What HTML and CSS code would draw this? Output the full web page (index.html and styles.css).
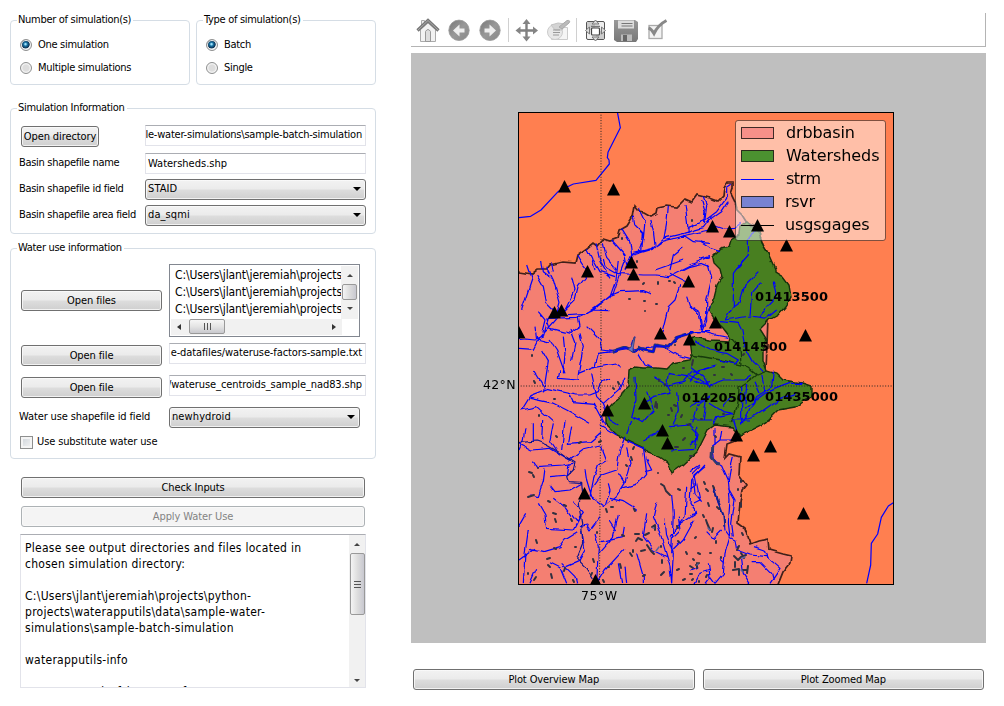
FILE: index.html
```html
<!DOCTYPE html>
<html lang="en">
<head>
<meta charset="utf-8">
<title>Water use simulation</title>
<link rel="stylesheet" href="styles.css">
</head>
<body>
<main class="window">
<section class="controls">
  <div class="top-groups">
    <fieldset class="group">
      <legend>Number of simulation(s)</legend>
      <label class="radio-row"><span class="radio on"></span><span>One simulation</span></label>
      <label class="radio-row"><span class="radio"></span><span>Multiple simulations</span></label>
    </fieldset>
    <fieldset class="group">
      <legend>Type of simulation(s)</legend>
      <label class="radio-row"><span class="radio on"></span><span>Batch</span></label>
      <label class="radio-row"><span class="radio"></span><span>Single</span></label>
    </fieldset>
  </div>
  <fieldset class="group sim-info">
    <legend>Simulation Information</legend>
    <div class="form-row first"><div class="lab"><span class="btn small">Open directory</span></div><div class="field tail"><span>le-water-simulations\sample-batch-simulation</span></div></div>
    <div class="form-row"><div class="lab">Basin shapefile name</div><div class="field">Watersheds.shp</div></div>
    <div class="form-row"><div class="lab">Basin shapefile id field</div><div class="combo">STAID<i class="caret"></i></div></div>
    <div class="form-row"><div class="lab">Basin shapefile area field</div><div class="combo">da_sqmi<i class="caret"></i></div></div>
  </fieldset>
  <fieldset class="group water">
    <legend>Water use information</legend>
    <div class="form-row r-list"><div class="lab"><span class="btn">Open files</span></div>
      <div class="listbox">
        <div class="list-main">
          <div class="list-items"><div>C:\Users\jlant\jeremiah\projects</div><div>C:\Users\jlant\jeremiah\projects</div><div>C:\Users\jlant\jeremiah\projects</div></div>
          <div class="vbar"><i class="up"></i><i class="thumb"></i><i class="down"></i></div>
        </div>
        <div class="hbar"><i class="left"></i><i class="thumb"><b></b><b></b><b></b></i><i class="right"></i></div>
      </div></div>
    <div class="form-row r-b"><div class="lab"><span class="btn">Open file</span></div><div class="field tail factors"><span>e-datafiles/wateruse-factors-sample.txt</span></div></div>
    <div class="form-row r-c"><div class="lab"><span class="btn">Open file</span></div><div class="field tail centroids"><span>/wateruse_centroids_sample_nad83.shp</span></div></div>
    <div class="form-row id-row"><div class="lab">Water use shapefile id field</div><div class="combo">newhydroid<i class="caret"></i></div></div>
    <label class="check-row"><span class="check"></span>Use substitute water use</label>
  </fieldset>
  <div class="btn wide">Check Inputs</div>
  <div class="btn wide disabled">Apply Water Use</div>
  <div class="log">
    <div class="log-text">Please see output directories and files located in<br>chosen simulation directory:<br><br>C:\Users\jlant\jeremiah\projects\python-<br>projects\waterapputils\data\sample-water-<br>simulations\sample-batch-simulation<br><br>waterapputils-info<br><br>area_summed_of_huc_sum_from</div>
    <div class="vbar tall"><i class="up"></i><i class="thumb"><b></b><b></b><b></b></i><i class="down"></i></div>
  </div>
</section>
<section class="plot">
  <div class="toolbar">
    <svg width="270" height="34" viewBox="411 13 270 34">
      <defs><linearGradient id="ball" x1="0" y1="0" x2="1" y2="1"><stop offset="0" stop-color="#777"/><stop offset=".5" stop-color="#999"/><stop offset="1" stop-color="#888"/></linearGradient>
      <linearGradient id="disk" x1="0" y1="0" x2="0" y2="1"><stop offset="0" stop-color="#999"/><stop offset="1" stop-color="#777"/></linearGradient></defs>
      <g stroke="#aaa" fill="#eee"><path d="M421.500 20.500h3v6h-3z"/><path d="M420.500 29.500L428 23l7.500 6.500v12h-15z" fill="#f2f2f2"/><path d="M425.500 41.500v-10q2.500-4 5 0v10z" fill="#ddd" stroke="#999"/></g>
      <path d="M417.500 30.500L428 20.500L438.500 30.500" fill="none" stroke="#777" stroke-width="3.200"/><path d="M418 30L428 20.500L438 30" fill="none" stroke="#aaa" stroke-width="1"/>
      <circle cx="459" cy="30.300" r="10.200" fill="url(#ball)" stroke="#999" stroke-width=".8"/><path d="M453 30.500l6.500-6v4h5v4h-5v4z" fill="#eee"/>
      <circle cx="490" cy="30.300" r="10.200" fill="url(#ball)" stroke="#999" stroke-width=".8"/><path d="M496 30.500l-6.500-6v4h-5v4h5v4z" fill="#eee"/>
      <path d="M508.500 18v24M576.500 18v24" stroke="#d0d0d0"/>
      <path d="M526.500 22v17M518 30.500h17" stroke="#808080" stroke-width="2.400"/><path d="M526.500 19l4 5h-8zM526.500 41.500l4-5h-8zM515.500 30.500l5-4v8zM538 30.500l-5-4v8z" fill="#858585"/>
      <g fill="#f5f5f5" stroke="#ccc"><path d="M551.500 27.500h16v12h-16z"/><circle cx="555" cy="32" r="7.500" fill="#e8e8e8"/><path d="M551 25l7-2l7 1l-3 6h-7z" fill="#d4d4d4" stroke="#c4c4c4"/><path d="M559 27l8-6.500q4-.5 2 2.500l-7 6z" fill="#bbb" stroke="#aaa"/></g><path d="M553 30h7M553 32.500h7M553 35h6" stroke="#999" stroke-width="1.200"/>
      <rect x="586.500" y="21.500" width="18" height="18" rx="1.500" fill="#eee" stroke="#555"/><path d="M587 22h8v8h-8zM596 31h8v8h-8z" fill="#ccc"/><path d="M595.500 20l3.500 4h-7zM595.500 41l3.500-4h-7zM585.500 30.500l4-3.500v7zM605.500 30.500l-4-3.500v7z" fill="#ddd" stroke="#777"/><rect x="591.500" y="28" width="8" height="7" rx="1" fill="#fff" stroke="#444" stroke-width="1.200"/><path d="M591 26.500h9" stroke="#777" stroke-width="1.500"/>
      <path d="M614 20h21l3 2v17l-2 3h-19l-3-2z" fill="url(#disk)"/><rect x="618" y="20.500" width="16" height="8" fill="#ddd"/><path d="M621.500 23.500h11M621.500 26h11" stroke="#777"/><rect x="621" y="34.500" width="11" height="6.500" fill="#bbb"/><rect x="623" y="35" width="4" height="6" fill="#666"/>
      <rect x="649" y="25.500" width="13" height="13" fill="#f3f3f3" stroke="#aaa" stroke-width="1.300"/><path d="M648.500 28q3 1 5.500 5.500q4-8.500 12.500-13" fill="none" stroke="#888" stroke-width="3"/>
    </svg>
  </div>
  <div class="canvas">
  <svg width="575" height="590" viewBox="411 53 575 590">
    <defs>
      <clipPath id="frame"><rect x="518" y="112" width="376" height="472"/></clipPath>
      <filter id="rough" filterUnits="userSpaceOnUse" x="500" y="100" width="410" height="500" color-interpolation-filters="sRGB"><feTurbulence type="fractalNoise" baseFrequency=".11" numOctaves="1" seed="4"/><feDisplacementMap in="SourceGraphic" scale="5" xChannelSelector="R" yChannelSelector="G"/></filter>
      <path id="tri" d="M0-6.500L6.500 6H-6.500Z"/>
    </defs>
    <rect x="518" y="112" width="376" height="472" fill="#ff7f50"/>
    <g clip-path="url(#frame)">
    <g filter="url(#rough)">
      <path class="basin" d="M510 270L519 272L532 274L538 269L547 269L550 265L562 262L575 263L577 255L587 248L593 243L597 246L603 239L610 241L618 238L620 230L627 226L632 218L634 206L638 211L645 212L652 216L657 213L658 208L667 206L677 207L685 199L692 202L697 195L710 198L718 201L723 196L724 187L727 182L733 182L733 188L731 194L735 202L737 210L742 215L747 223L756 227L759 233L763 245L768 253L770 263L766 371L770 420L745 430L735 441L727 444L725 458L729 454L740 457L739 475L746 485L742 490L740 503L738 523L745 528L750 544L758 541L768 539L769 550L783 554L791 556L790 563L783 572L775 592L505 592Z"/>
      <path class="shed" d="M747 222L741 226L740 234L731 240L729 247L721 249L713 257L714 263L720 269L722 277L717 285L714 297L709 310L715 320L723 328L730 337L729 341L710 340L693 337L690 340L692 355L690 360L673 363L667 369L657 368L643 368L635 367L629 370L628 386L623 391L620 398L612 404L605 412L605 423L617 435L627 440L642 447L647 453L660 458L667 463L672 473L683 465L697 452L708 430L715 425L732 427L740 436L760 426L768 420L778 410L795 407L802 402L811 397L811 386L802 383L783 380L777 374L767 371L763 360L763 348L767 340L760 329L769 320L778 315L785 307L791 297L789 285L783 277L775 272L775 269L768 253L763 245L759 233Z"/>
      <path d="M690 355L703 357L720 360L741 365L748 368L757 375L767 371M741 365L740 348L731 338M757 375L747 383L739 388L738 403L735 413L730 423" fill="none" stroke="#163b0c" stroke-width="1.300"/>
    </g>
    <g filter="url(#rough)">
    <g class="stream" transform="translate(510 105) scale(.33333)">
      <path d="M350 480L370 445L430 430L460 400L520 385L580 368L610 330M370 450L420 435L455 410L530 390L600 375M370 335L375 360L400 385L395 440M385 310L405 350L400 400L385 445M422 345L430 380L435 420M475 305L472 340L462 400M525 300L532 350L535 385M575 285L585 320L580 360M335 370L360 410L365 450L345 495M305 405L345 450L350 480M280 415L290 460L320 495M258 415L270 470L300 520M230 430L245 460L255 495M200 450L215 475L235 500M125 475L130 500M520 390L550 410L600 415M520 425L490 450L480 495M600 455L540 480L510 495"/>
    </g>
    <g class="stream" transform="translate(700 105) scale(.33333)">
      <path d="M10 350L50 320L80 280L80 245L95 235M15 355L65 320L85 290M10 275L20 300L15 345L-40 370M35 360L70 372L105 370L125 355M165 375L145 405L145 450L105 495M0 410L30 430L60 440M0 460L30 452"/>
    </g>
    <g class="stream" transform="translate(510 260) scale(.33333)">
      <path d="M27 265L70 268L85 238L120 200L150 165L230 160L300 110L318 60L325 0M27 235L75 240L100 230L115 175L200 172L250 150L310 100L330 40L345 0M232 45L205 80L195 120L150 165M185 50L195 90L165 150M110 20L130 60L150 130L140 165M80 45L100 80L110 130L130 150M50 15L65 60L35 150M95 0L100 35L120 50M250 0L270 35L315 50M280 0L285 20L320 40M320 40L400 45L440 45L475 50L535 20L575 10L600 20M435 30L520 0M480 40L530 65M305 105L330 95L400 92L425 102M510 75L495 120L475 140L465 180L455 220M530 110L540 140L570 160L575 210M600 140L575 205M250 150L295 152M85 155L105 180L95 220M75 200L80 240L120 250M110 175L120 205L180 220L210 200L205 170M160 230L165 280L160 340M180 210L195 250L185 300M210 220L220 260L205 340M120 240L140 270L165 340M230 200L270 240L275 270L310 275L380 265L440 260L475 262L505 230L560 215L600 215M365 260L375 230M385 280L405 315L430 325M465 265L500 285L540 295M310 275L265 280L255 320L205 340L205 360L145 355L150 330M95 270L115 305L100 400M70 330L95 370L110 390L60 410L35 450L80 440L130 485M335 325L315 312L240 325M300 355L275 365L265 395L240 405L200 405L110 385M345 350L330 385L280 430L260 410L245 340M280 430L300 480L325 495M60 415L130 430L170 450L240 490M180 405L190 425L250 430L285 495M375 350L378 420L365 470L400 485L430 450L410 395M400 430L430 410L480 400L470 375L430 350M470 375L520 365L545 335L600 320M470 375L475 340L530 350L570 370L600 365M500 400L505 450L490 495M600 410L560 440L545 490"/>
      <path d="M305 277L345 264L370 275L385 262L400 270L430 275L435 255L475 262L500 232L555 215" stroke="#22307d" stroke-width="9"/>
      <path d="M310 276L345 266L370 276L385 264L400 271L430 275L436 256L475 262L500 232L555 215"/>
    </g>
    <g class="stream" transform="translate(690 260) scale(.33333)">
      <path d="M160 0L130 40L130 140L105 180L180 168L230 175L260 150M205 35L165 75L150 125L130 140M215 65L185 100L180 165M250 65L260 110L235 135L205 170M90 185L145 190L155 210L165 260L190 305L220 335M55 15L65 55L50 120L50 180L35 215L75 225L115 232M0 140L25 165L35 210M0 215L30 215M15 245L60 270L110 280L145 300L135 312L85 300M0 365L30 330L80 315M0 345L60 375L100 360L165 360L185 345M0 320L40 350L60 380M250 335L245 380L200 410L155 495L155 380M335 370L300 370L260 385L225 400L165 445M320 400L270 415L235 440L200 465L155 480M195 365L210 400M215 345L225 395M170 375L165 430M0 440L50 415L40 480M60 430L100 455L130 460L80 470L70 495M125 405L100 440"/>
    </g>
    <g class="stream" transform="translate(510 420) scale(.33333)">
      <path d="M45 25L40 60L27 90M70 10L70 65M98 0L95 60M130 10L120 60L140 90M165 0L155 90M185 20L175 70L240 65L270 40M27 70L65 90L120 85L180 120L220 90L270 78M70 125L80 140L160 135L190 130M105 145L100 185L85 230L60 225M120 170L175 165L180 130M120 195L135 215L180 210L215 190M130 235L170 265L200 305L220 280L190 245M85 250L105 285L110 325L190 330L210 290M210 320L230 315L240 330L270 290M205 335L165 360L150 380L100 395L60 385M27 320L50 280M55 330L45 400L40 490M27 420L75 385M120 425L150 440L170 490M80 445L60 490M155 430L195 470L200 490M170 440L205 425L225 390L215 330M255 345L265 380L260 490L285 450L345 385M225 145L230 180L245 230L285 260L320 230L345 190L325 160M240 230L250 180L265 135L290 120L275 80M240 215L275 165L320 150L330 90L345 50M285 260L300 210L295 190M300 235L340 245L380 270M335 205L385 190L410 160L400 80M345 190L360 130L350 85M410 120L425 150L405 155M355 65L400 85M270 15L320 45M325 285L310 350L265 400M300 300L320 330M340 320L335 350L275 365M410 280L400 350L430 390L470 410M440 245L430 290L450 340L480 440L485 490M465 295L470 345L490 400L485 490M485 225L490 280L485 400M505 290L510 330L490 350M530 200L525 290L480 350M585 135L545 180L540 250L560 280L500 320M570 140L550 160L555 220L575 245M550 305L520 360L490 390M325 430L335 490M345 440L350 490M380 400L400 470L400 490M600 450L570 460L555 490M365 0L350 40M480 20L540 15L565 40L555 85L480 90M400 60L440 40L460 20"/>
      <path d="M27 68L80 63L110 75L140 92L165 110L195 128L190 150L170 170L175 185L215 187L218 220L205 250L215 310L218 370L200 415L225 440L250 480" stroke="#0c1290"/>
    </g>
    <g class="stream" transform="translate(690 420) scale(.33333)">
      <path d="M95 30L90 60L65 80L70 120L95 135L115 180L120 240L115 310L120 350L105 400L100 460L75 490M75 25L75 75M135 60L90 60M130 110L120 150L115 180M115 205L135 240L125 310L130 350M0 155L30 135M45 140L15 165L30 240L10 250M0 205L20 190L15 165M0 285L20 280M70 200L85 250L100 285L105 330L120 350M50 335L70 355L95 330M115 350L135 360L140 390L180 405L230 410L270 445L240 490M195 380L225 390L235 415M185 425L210 425L245 460L250 480M90 415L105 430M55 430L60 470L45 490M60 470L75 490M155 420L160 460L180 490M0 450L25 440M0 75L20 60L20 20M0 0L70 0M120 0L180 0M130 0L140 30"/>
      <path d="M65 78L63 115L75 130L90 132" stroke="#303a70" stroke-width="9"/><path d="M70 205L85 245L100 285L103 320" stroke="#102090" stroke-width="6"/>
    </g>
    </g>
    <g class="stream" transform="translate(510 105) scale(.33333)"><path d="M27 338L62 334L93 315L145 259L190 237L258 226L298 177L297 165L292 158L294 142L331 68L322 20"/></g>
    <g class="stream" transform="translate(690 420) scale(.33333)"><path d="M530 490L542 435L544 370L563 342L574 292L595 258L610 248"/></g>
    <g class="ponds">
      <path d="M692 220l0 1M622 238l0 1M637 261l0 1M643 284l1-1M658 282l0 2M669 281l1 0M674 282l1 1M629 299l1 0M644 301l1 0M656 304l1 0M645 311l0 0M675 345l0 0M532 355l0 1M534 381l1 2M554 399l1 0M613 388l1 1M618 382l1 2M539 415l0 1M655 407l1-5M657 404l0 4M671 408l1 3M674 405l2 1M668 415l1 0M681 417l1-2M659 380l0 1M665 384l0 1M683 368l1 0M692 365l1-5M714 375l1 0M731 374l1 1M743 355l1-1M724 367l-2 0M701 419l1 0M724 414l-1 0M715 436l1 1M690 424l-2 1M685 438l-2 2M678 447l-3 0M692 456l-2 0"/>
      <path d="M556 436l1 1M579 443l2-1M599 442l2-1M529 472l3 1M533 475l1 2M538 468l0 0M528 497l6-2M548 501l2 1M564 505l2 1M553 513l3 1M555 519l1 3M571 519l1 2M634 447l-1 2M631 457l1 3M626 465l1 1M658 473l0 0M661 484l3 2l2 5l4 4M678 489l2 1M634 509l1 2M613 507l-2 0M606 509l1 3M597 532l0 1M622 535l2 1M635 534l4 0M636 541l2-3l4 2M652 527l3-2l0 5M645 535l4-2M641 551l4-1M647 545l4 6l3 3M633 550l0 2M630 553l2 3M620 564l1 4M608 567l1 0M603 580l1 2M593 559l1 3M661 546l0 1M662 560l0 3M661 575l3-3M678 541l1 1M677 526l1 2M686 552l1 2M698 553l2 1M696 565l3-2M690 574l2 0M677 570l2-1M683 580l2-1M699 581l0 1M690 566l3 2M536 577l-2 3M551 574l1 4M548 565l2 2M565 568l-1 3M573 580l1 2M528 573l0 1M536 540l1 3M547 559l3-1M554 548l2 1M575 547l1 0M592 573l-1 2M645 575l-2 1M704 482l1 2M706 489l2 2M713 486l1 2M708 503l1 3M717 507l2 2M703 515l1 2M706 520l1 3l3 7M713 528l-1 4M696 537l-1 1M716 541l0 2M710 553l1 0M741 480l0 2M738 489l0 1M741 503l0 4M742 533l1 2M737 550l2-4M734 556l4 4l3-3l5-2M741 553l3 5M735 562l0 5M733 570l6-1l0 6M748 566l-1 7M743 570l4 0M693 559l1 1M697 568l0-5M693 579l-1 1M707 575l-1 2M721 557l0 1"/>
      <path d="M656 551l3-4M697 565l1-1M653 528l1 0M742 558l3-1M708 528l2 2M741 570l2 2" stroke="#5560a0" stroke-width="1.500"/>
      <path d="M628 349l3-2l3-10l1 0l-2 12l0 3z" fill="#6871c8" stroke="#34386c" stroke-width=".8"/>
    </g>
    <path d="M601 112V340L599.500 584M518 386H894" fill="none" stroke="#222" stroke-width="1" stroke-dasharray="1 1.700"/>
    <g fill="#000"><use href="#tri" x="564.500" y="186.500"/><use href="#tri" x="613.500" y="189.500"/><use href="#tri" x="712.500" y="226.500"/><use href="#tri" x="729.500" y="231.500"/><use href="#tri" x="786.500" y="245.500"/><use href="#tri" x="587.500" y="271.500"/><use href="#tri" x="631.500" y="262.500"/><use href="#tri" x="633.500" y="274.500"/><use href="#tri" x="688.500" y="281.500"/><use href="#tri" x="554.500" y="312.500"/><use href="#tri" x="561.500" y="310.500"/><use href="#tri" x="519" y="332.500"/><use href="#tri" x="660.500" y="333.500"/><use href="#tri" x="689.500" y="339.500"/><use href="#tri" x="715.500" y="322.500"/><use href="#tri" x="805.500" y="335.500"/><use href="#tri" x="607.500" y="410.500"/><use href="#tri" x="644.500" y="403.500"/><use href="#tri" x="662.500" y="430.500"/><use href="#tri" x="667.500" y="443.500"/><use href="#tri" x="736.500" y="435.500"/><use href="#tri" x="753.500" y="455.500"/><use href="#tri" x="770.500" y="446.500"/><use href="#tri" x="803.500" y="513.500"/><use href="#tri" x="584.500" y="493.500"/><use href="#tri" x="595.500" y="580.500"/></g>
    </g>
    <g class="gage">
      <text x="755" y="301" textLength="73">01413500</text><text x="714" y="351" textLength="73">01414500</text><text x="682" y="402" textLength="73">01420500</text><text x="765" y="401" textLength="73">01435000</text>
    </g>
    <rect x="735.500" y="120.500" width="150" height="120" rx="2.500" fill="#fff" fill-opacity=".5" stroke="#000" stroke-opacity=".5"/>
    <g stroke="#000" stroke-opacity=".75" stroke-width="1"><rect x="741.500" y="127.500" width="32" height="11" fill="#f69089"/><rect x="741.500" y="150.500" width="32" height="11" fill="#4b9130"/><rect x="741.500" y="196.500" width="32" height="11" fill="#7882d2"/></g>
    <path d="M741 179.500h33" stroke="#00f" stroke-width="1.200"/><path d="M741 225.500h33" stroke="#000" stroke-width="1.200"/><use href="#tri" x="757.500" y="225.500"/>
    <g class="key"><text x="786" y="138" textLength="69">drbbasin</text><text x="786" y="161" textLength="93.500">Watersheds</text><text x="786" y="184" textLength="35">strm</text><text x="785" y="207" textLength="30">rsvr</text><text x="785" y="230" textLength="84.500">usgsgages</text></g>
    <rect x="518.500" y="112.500" width="375" height="472" fill="none" stroke="#000"/>
    <g class="axis"><text x="483" y="389" textLength="32.500">42°N</text><text x="581" y="600" textLength="36">75°W</text></g>
  </svg>
  </div>
  <div class="plot-buttons"><div class="btn">Plot Overview Map</div><div class="btn">Plot Zoomed Map</div></div>
</section>
</main>
</body>
</html>
```
FILE: styles.css
```css
* { box-sizing: border-box; }
body { margin: 0; background: #fff; color: #000; font: 11px/14px "DejaVu Sans Condensed", "DejaVu Sans", sans-serif; font-stretch: condensed; letter-spacing: -0.3px; }
.window { display: flex; width: 1004px; height: 706px; padding: 13px 18px 0 10px; gap: 35px; overflow: hidden; white-space: nowrap; }
.controls { width: 366px; }
.top-groups { display: flex; gap: 6px; margin-bottom: 16px; }
.group { margin: 0; min-width: 0; border: 1px solid #d5dde5; border-radius: 4px; padding: 5px 9px 0; }
.group legend { height: 14px; margin-left: -3px; padding: 0 2px 0 1px; }
.top-groups .group { width: 180px; height: 72px; padding-top: 6px; }
.radio-row { display: flex; align-items: center; gap: 6px; height: 23px; }
.radio { width: 12px; height: 12px; border: 1px solid #8e8f8f; border-radius: 50%; background: radial-gradient(#ddd 0 40%, #eee 60%); box-shadow: inset 0 0 0 1px #f4f4f4; }
.radio.on { background: radial-gradient(circle at 45% 42%, #9fe0f8 0 8%, #1a77a8 22%, #0b2f50 48%, #e8eef2 58%); }
.sim-info { height: 133px; margin-bottom: 7px; }
.form-row { display: flex; align-items: center; height: 26px; }
.form-row.first { height: 30px; }
.lab { width: 126px; margin-left: -1px; flex: none; }
.water .lab { width: 150px; }
.btn { display: flex; align-items: center; justify-content: center; height: 21px; border: 1px solid #707070; border-radius: 3px; background: linear-gradient(#f2f2f2, #ebebeb 48%, #dddddd 52%, #cfcfcf); box-shadow: inset 0 0 0 1px #fafafacc; padding-top: 1px; letter-spacing: -0.1px; }
.lab .btn { width: 141px; margin-left: 2px; }
.lab .btn.small { width: 78px; margin-top: 2px; }
.field { width: 221px; height: 21px; border: 1px solid #e2e3ea; border-top-color: #abadb3; padding: 3px 2px; overflow: hidden; background: #fff; letter-spacing: 0; }
.tail { display: flex; justify-content: flex-end; padding: 2px 3px 0 0; letter-spacing: -0.22px; }
.factors, .centroids { letter-spacing: -0.1px; }
.combo { width: 221px; height: 21px; display: flex; align-items: center; justify-content: space-between; border: 1px solid #707070; border-radius: 3px; padding: 0 4px 0 2px; background: linear-gradient(#f2f2f2, #ebebeb 48%, #dddddd 52%, #cfcfcf); box-shadow: inset 0 0 0 1px #fafafacc; letter-spacing: 0.1px; }
.caret { border: 4px solid transparent; border-top-color: #000; border-bottom: 0; }
.water { height: 218px; margin-bottom: 18px; }
.water .field { width: 197px; margin-top: -4px; }
.water .combo { width: 191px; }
.form-row.r-list { height: 80px; }
.form-row.r-b { height: 31px; }
.form-row.r-c { height: 33px; }
.id-row, .check-row { letter-spacing: -0.12px; }
.listbox { width: 191px; height: 73px; border: 1px solid #828790; padding: 1px; }
.list-main { display: flex; height: 53px; }
.list-items { width: 171px; padding: 1px 0 0 4px; overflow: hidden; font-size: 12px; line-height: 17px; letter-spacing: -0.1px; }
.vbar { display: flex; flex: none; flex-direction: column; align-items: center; width: 17px; height: 53px; background: #f1f1f1; padding: 8px 0 4px; }
.vbar .thumb { width: 15px; height: 16px; margin: 7px 0; border: 1px solid #999; border-radius: 2px; background: linear-gradient(90deg, #f4f4f4, #ddd 50%, #c8c8d0); }
.up, .down { border: 3px solid transparent; }
.up { border-bottom-color: #444; border-top: 0; }
.down { border-top-color: #444; border-bottom: 0; }
.hbar { display: flex; align-items: center; width: 171px; height: 16px; background: #f1f1f1; padding: 0 6px; }
.left, .right { border: 3px solid transparent; }
.left { border-right: 4px solid #333; border-left: 0; }
.right { border-left: 4px solid #333; border-right: 0; margin-left: auto; }
.hbar .thumb { display: flex; align-items: center; justify-content: center; gap: 2px; width: 36px; height: 15px; margin-left: 8px; border: 1px solid #999; border-radius: 2px; background: linear-gradient(#f6f6f6, #e4e4e4 50%, #c9c9ce); }
.hbar b { width: 1px; height: 7px; background: #555; }
.check-row { display: flex; align-items: center; gap: 4px; height: 24px; }
.check { width: 13px; height: 13px; border: 1px solid #8e8f8f; background: linear-gradient(135deg, #ccd2d8, #f6f6f6); box-shadow: inset 0 0 0 2px #f4f4f4; }
.wide { width: 344px; margin: 0 0 8px 11px; }
.disabled { color: #838383; border-color: #adb2b5; background: #f4f4f4; }
.log { display: flex; width: 346px; height: 154px; margin: -1px 0 0 10px; border: 1px solid #e2e3ea; border-top-color: #abadb3; overflow: hidden; }
.log-text { flex: 1; padding: 5px 0 0 4px; font-size: 12px; line-height: 16px; letter-spacing: 0.27px; }
.vbar.tall { width: 16px; height: 152px; padding: 8px 0 5px; }
.tall .thumb { display: flex; flex-direction: column; align-items: center; justify-content: center; gap: 2px; width: 15px; height: 62px; }
.tall b { width: 7px; height: 1px; background: #555; }
.tall .down { margin-top: auto; }
.plot { width: 575px; }
.toolbar { height: 34px; border-right: 1px solid #b4b4b4; border-bottom: 1px solid #b4b4b4; margin-bottom: 6px; }
.toolbar svg, .canvas svg { display: block; }
.canvas { height: 590px; background: #bfbfbf; letter-spacing: 0; font-stretch: normal; font-family: "DejaVu Sans", sans-serif; }
.plot-buttons { display: flex; gap: 8px; padding: 26px 2px 0; }
.plot-buttons .btn { flex: 1; }
.basin { fill: #f47f72; stroke: #40201a; stroke-width: 1.7; }
.shed { fill: #487f20; stroke: #16300c; stroke-width: 1.4; }
.stream { fill: none; stroke: #0000ff; stroke-width: 3.6; stroke-linejoin: round; }
.ponds { fill: none; stroke: #303040; stroke-width: 2; stroke-linecap: round; stroke-linejoin: round; }
.gage { font-weight: bold; font-size: 13px; }
.key { font-size: 16px; }
.axis { font-size: 12.5px; }
```
